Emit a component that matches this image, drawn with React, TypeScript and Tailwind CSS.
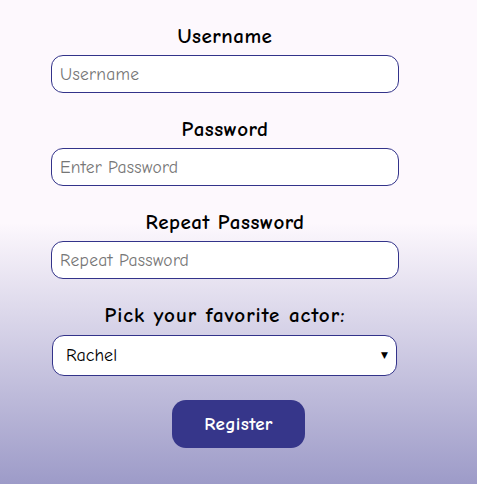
const font = { fontFamily: '"Comic Sans MS", "Comic Neue", "DejaVu Sans", sans-serif' };

const Field = ({ label, placeholder, type }: { label: string; placeholder: string; type: string }) => {
  return (
    <div className="flex flex-col items-center w-full">
      <label className="text-[21px] font-bold text-black leading-[24px] tracking-[0.5px] mb-[7px]">{label}</label>
      <input
        type={type}
        placeholder={placeholder}
        className="w-full h-[38px] px-[8px] rounded-[12px] border border-[#33338a] bg-white text-[17.5px] tracking-[0.3px] placeholder:text-[#767676] outline-none"
        style={font}
      />
    </div>
  );
};

export default function App() {
  return (
    <div
      className="w-[477px] h-[484px] bg-[linear-gradient(to_bottom,#fdf8fd_46%,#9d9bc8_100%)] pt-[24px]"
      style={font}
    >
      <form className="ml-[51px] w-[348px] flex flex-col items-center gap-[24px]">
        <Field label="Username" placeholder="Username" type="text" />
        <Field label="Password" placeholder="Enter Password" type="password" />
        <Field label="Repeat Password" placeholder="Repeat Password" type="password" />
        <div className="flex flex-col items-center w-full">
          <label className="text-[21px] font-bold text-black leading-[24px] tracking-[1px] mb-[8px]">
            Pick your favorite actor:
          </label>
          <div className="relative w-[345px] self-start ml-[1px]">
            <select
              className="w-full h-[41px] pl-[13px] pr-[30px] rounded-[12px] border border-[#33338a] bg-white text-[18px] text-black appearance-none outline-none"
              style={font}
              defaultValue="Rachel"
            >
              <option>Rachel</option>
              <option>Ross</option>
              <option>Monica</option>
              <option>Chandler</option>
              <option>Joey</option>
              <option>Phoebe</option>
            </select>
            <span className="absolute right-[9px] top-[14px] text-[9px] leading-[12px] text-black pointer-events-none">▼</span>
          </div>
        </div>
        <button
          type="button"
          className="self-start ml-[121px] w-[133px] h-[48px] rounded-[14px] bg-[#36368a] text-white text-[19px] font-bold tracking-[0.3px]"
          style={font}
        >
          Register
        </button>
      </form>
    </div>
  );
}
